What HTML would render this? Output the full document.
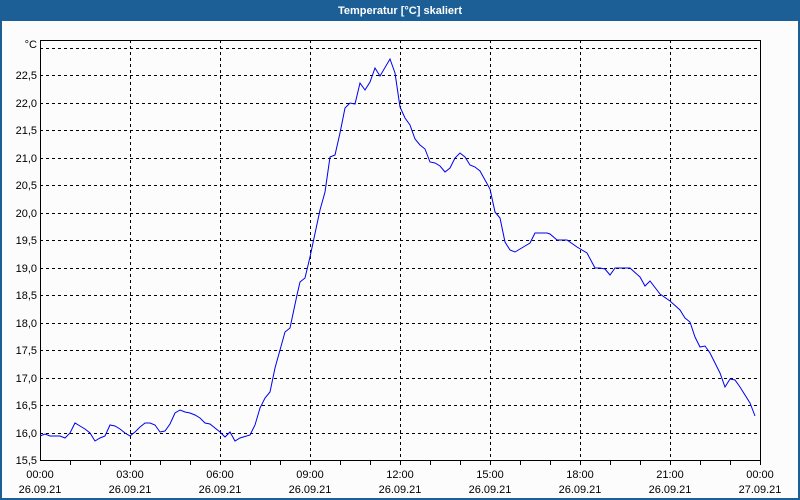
<!DOCTYPE html>
<html><head><meta charset="utf-8"><style>
html,body{margin:0;padding:0;width:800px;height:500px;overflow:hidden;background:#fcfcfc}
svg{display:block}
text{font-family:"Liberation Sans",sans-serif;font-size:11px;fill:#000}
</style></head><body>
<svg width="800" height="500" xmlns="http://www.w3.org/2000/svg">
<rect x="0" y="0" width="800" height="500" fill="#1c5f96"/>
<rect x="2" y="21" width="796" height="477" fill="#fcfcfc"/>
<text x="400" y="14" text-anchor="middle" style="fill:#fff;font-weight:bold">Temperatur [°C] skaliert</text>
<g stroke="#000" stroke-width="1" stroke-dasharray="3,3" fill="none" shape-rendering="crispEdges">
<path d="M40 48.5H760M40 75.5H760M40 103.5H760M40 130.5H760M40 158.5H760M40 185.5H760M40 213.5H760M40 240.5H760M40 268.5H760M40 295.5H760M40 323.5H760M40 350.5H760M40 378.5H760M40 405.5H760M40 433.5H760"/>
<path d="M130.5 40V460M220.5 40V460M310.5 40V460M400.5 40V460M490.5 40V460M580.5 40V460M670.5 40V460"/>
</g>
<g stroke="#000" stroke-width="1" fill="none" shape-rendering="crispEdges">
<path d="M40.5 40.5H760.5V460.5H40.5Z"/>
<path d="M70.5 460V465M100.5 460V465M130.5 460V465M160.5 460V465M190.5 460V465M220.5 460V465M250.5 460V465M280.5 460V465M310.5 460V465M340.5 460V465M370.5 460V465M400.5 460V465M430.5 460V465M460.5 460V465M490.5 460V465M520.5 460V465M550.5 460V465M580.5 460V465M610.5 460V465M640.5 460V465M670.5 460V465M700.5 460V465M730.5 460V465M760.5 460V465"/>
</g>
<polyline fill="none" stroke="#0000ee" stroke-width="1" points="40,436 45,434 50,436 60,436 65,438 70,433 75,423 80,426 85,429 90,433 95,441 100,438 105,436 110,425 115,426 120,429 125,433 130,436 135,432 140,427 145,423 150,423 155,425 160,432 165,431 170,424 175,413 180,410 185,412 190,413 195,415 200,418 205,423 210,424 215,428 220,432 225,437 230,432 235,441 240,438 250,435 255,425 260,408 265,398 270,392 275,368 285,332 290,328 297,295 300,282 305,278 310,257 320,210 325,192 330,157 335,155 340,133 345,108 350,103 355,104 360,83 365,90 370,82 375,68 380,76 390,59 395,73 400,107 405,118 410,125 415,139 420,145 425,149 430,162 435,163 440,166 445,172 450,168 455,158 460,153 465,157 470,165 475,167 480,171 485,180 490,189 495,212 500,218 505,242 510,250 515,252 520,249 525,246 530,243 535,233 547,233 550,234 557,240 567,240 577,247 587,253 595,268 600,268 605,269 610,275 615,268 630,268 640,277 645,286 650,281 660,294 670,301 680,310 685,318 690,322 695,337 700,347 705,346 710,353 720,373 725,387 730,379 735,380 740,387 750,403 755,416"/>
<g text-anchor="end">
<text x="37" y="48">°C</text>
<text x="37" y="79">22,5</text><text x="37" y="107">22,0</text><text x="37" y="134">21,5</text><text x="37" y="162">21,0</text><text x="37" y="189">20,5</text><text x="37" y="217">20,0</text><text x="37" y="244">19,5</text><text x="37" y="272">19,0</text><text x="37" y="299">18,5</text><text x="37" y="327">18,0</text><text x="37" y="354">17,5</text><text x="37" y="382">17,0</text><text x="37" y="409">16,5</text><text x="37" y="437">16,0</text><text x="37" y="464">15,5</text>
</g>
<g text-anchor="middle">
<text x="40" y="478">00:00</text><text x="40" y="493">26.09.21</text>
<text x="130" y="478">03:00</text><text x="130" y="493">26.09.21</text>
<text x="220" y="478">06:00</text><text x="220" y="493">26.09.21</text>
<text x="310" y="478">09:00</text><text x="310" y="493">26.09.21</text>
<text x="400" y="478">12:00</text><text x="400" y="493">26.09.21</text>
<text x="490" y="478">15:00</text><text x="490" y="493">26.09.21</text>
<text x="580" y="478">18:00</text><text x="580" y="493">26.09.21</text>
<text x="670" y="478">21:00</text><text x="670" y="493">26.09.21</text>
<text x="760" y="478">00:00</text><text x="760" y="493">27.09.21</text>
</g>
</svg>
</body></html>
